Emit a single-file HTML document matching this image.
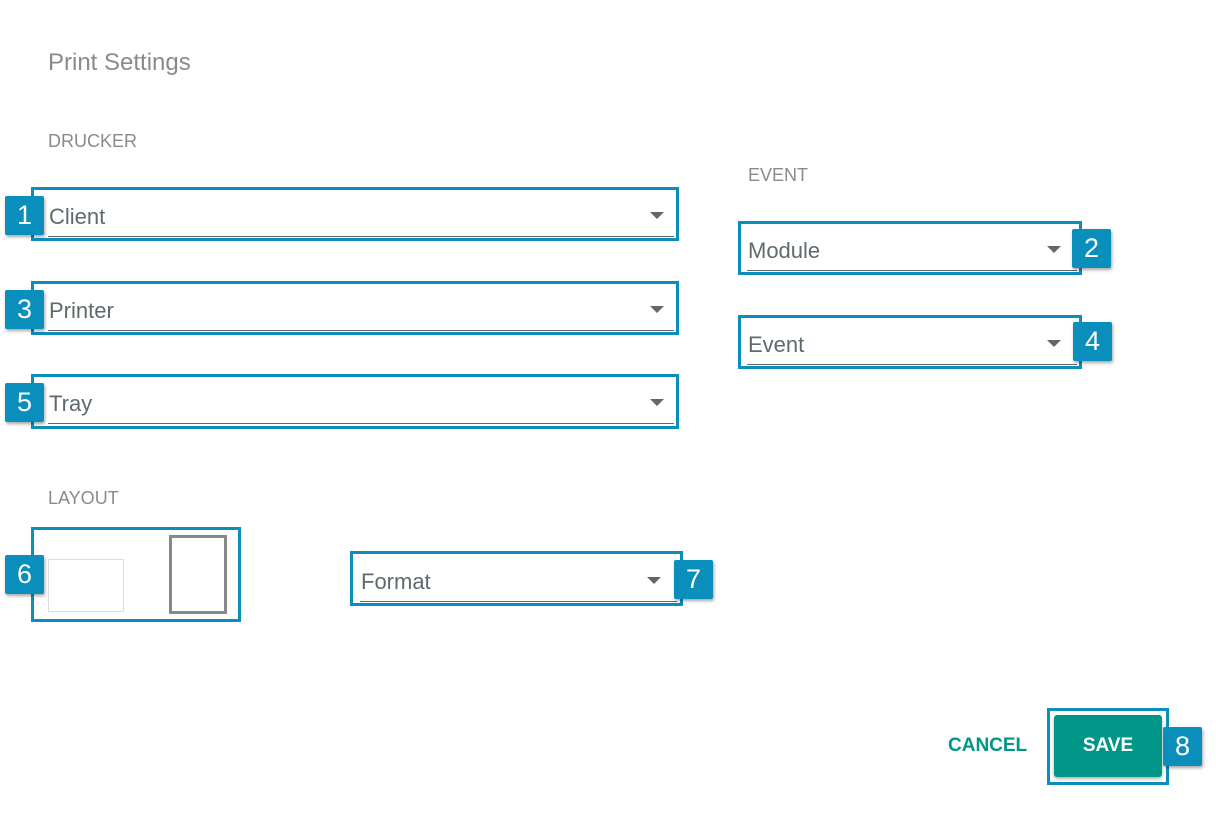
<!DOCTYPE html>
<html><head><style>
body{margin:0;width:1216px;height:833px;background:#fff;position:relative;font-family:"Liberation Sans",Arial,sans-serif;overflow:hidden}
.a{position:absolute}
.lbl{color:#8a8a8a;font-size:18px}
.box{position:absolute;border:3px solid #0a8fbd;box-sizing:border-box}
.bd{position:absolute;width:39px;height:39px;background:#0a8fbd;color:#fff;font-size:27px;text-align:center;line-height:39px;border-radius:2px;box-shadow:1px 2px 3px rgba(0,0,0,.35)}
.f{position:absolute;border-bottom:1px solid #666;color:#5f6a6d;font-size:22px}
.f span{position:absolute;left:1px;top:3px}
.f i{position:absolute;right:10px;top:11px;width:0;height:0;border-left:7px solid transparent;border-right:7px solid transparent;border-top:7px solid #666}
</style></head><body>
<div class="a" style="left:48px;top:49px;font-size:24px;color:#8a8a8a">Print Settings</div>
<div class="a lbl" style="left:48px;top:131px">DRUCKER</div>
<div class="a lbl" style="left:748px;top:165px">EVENT</div>
<div class="a lbl" style="left:48px;top:488px">LAYOUT</div>

<div class="box" style="left:31px;top:187px;width:648px;height:54px"></div>
<div class="f" style="left:48px;top:201px;width:626px;height:35px"><span>Client</span><i></i></div>
<div class="bd" style="left:5px;top:196px">1</div>

<div class="box" style="left:31px;top:281px;width:648px;height:54px"></div>
<div class="f" style="left:48px;top:295px;width:626px;height:35px"><span>Printer</span><i></i></div>
<div class="bd" style="left:5px;top:290px">3</div>

<div class="box" style="left:31px;top:374px;width:648px;height:55px"></div>
<div class="f" style="left:48px;top:388px;width:626px;height:35px"><span>Tray</span><i></i></div>
<div class="bd" style="left:5px;top:383px">5</div>

<div class="box" style="left:738px;top:221px;width:344px;height:54px"></div>
<div class="f" style="left:747px;top:235px;width:330px;height:35px"><span>Module</span><i style="right:16px"></i></div>
<div class="bd" style="left:1072px;top:229px">2</div>

<div class="box" style="left:738px;top:315px;width:344px;height:54px"></div>
<div class="f" style="left:747px;top:329px;width:330px;height:35px"><span>Event</span><i style="right:16px"></i></div>
<div class="bd" style="left:1073px;top:322px">4</div>

<div class="box" style="left:31px;top:527px;width:210px;height:95px"></div>
<div class="a" style="left:48px;top:559px;width:74px;height:51px;border:1px solid #ddd"></div>
<div class="a" style="left:169px;top:535px;width:52px;height:73px;border:3px solid #888"></div>
<div class="bd" style="left:5px;top:555px">6</div>

<div class="box" style="left:350px;top:551px;width:333px;height:55px"></div>
<div class="f" style="left:360px;top:566px;width:317px;height:35px"><span>Format</span><i style="right:16px"></i></div>
<div class="bd" style="left:674px;top:560px">7</div>

<div class="a" style="left:948px;top:735px;color:#009688;font-weight:bold;font-size:19px">CANCEL</div>
<div class="box" style="left:1047px;top:708px;width:122px;height:77px"></div>
<div class="a" style="left:1054px;top:715px;width:108px;height:62px;background:#009688;border-radius:3px;color:#fff;font-weight:bold;font-size:19px;text-align:center;line-height:62px;box-shadow:0 2px 3px rgba(0,0,0,.3)">SAVE</div>
<div class="bd" style="left:1163px;top:727px">8</div>
</body></html>
